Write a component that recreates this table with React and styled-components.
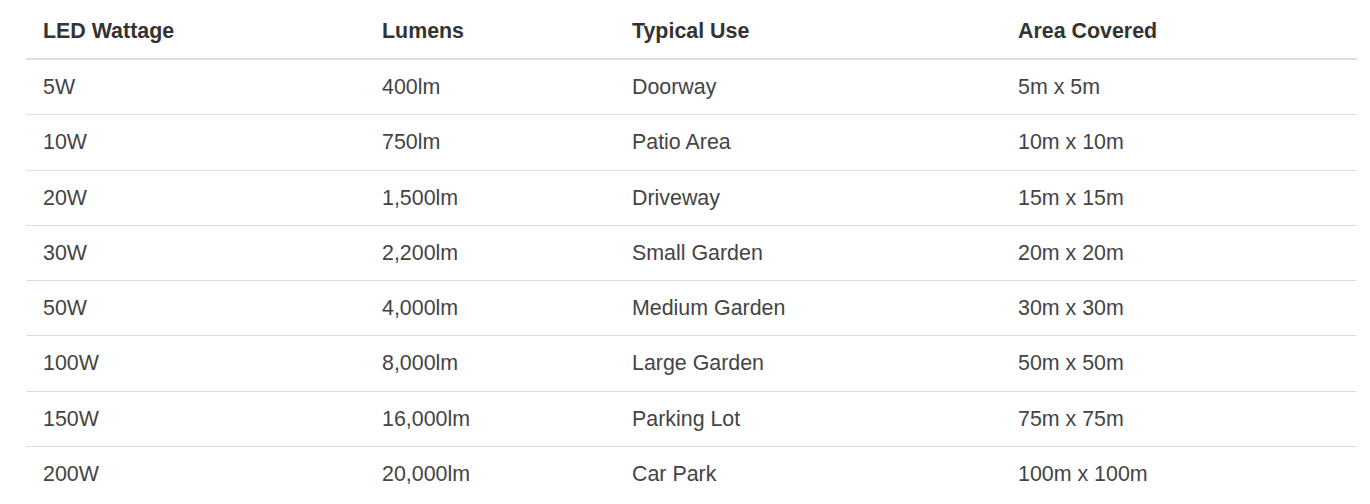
import * as React from 'react';
import styled, { createGlobalStyle } from 'styled-components';


/* data */
const rows = [
    ['5W', '400lm', 'Doorway', '5m x 5m'],
    ['10W', '750lm', 'Patio Area', '10m x 10m'],
    ['20W', '1,500lm', 'Driveway', '15m x 15m'],
    ['30W', '2,200lm', 'Small Garden', '20m x 20m'],
    ['50W', '4,000lm', 'Medium Garden', '30m x 30m'],
    ['100W', '8,000lm', 'Large Garden', '50m x 50m'],
    ['150W', '16,000lm', 'Parking Lot', '75m x 75m'],
    ['200W', '20,000lm', 'Car Park', '100m x 100m'],
];

const headings = ['LED Wattage', 'Lumens', 'Typical Use', 'Area Covered'];
const colWidths = [339, 250, 386, 356];


/* styles */
const GlobalStyle = createGlobalStyle`
  html, body {
    margin: 0;
    padding: 0;
    background: #fff;
  }
`;

const Page = styled('div')`
  padding: 0 13px 0 26px;
  font-family: "Liberation Sans", Arial, sans-serif;
`;

const Table = styled('table')`
  width: 1331px;
  border-collapse: collapse;
  table-layout: fixed;
  font-size: 21.4px;
`;

const HeadCell = styled('th')`
  text-align: left;
  font-weight: bold;
  color: #333;
  line-height: 23px;
  padding: 20px 17px 15px;
  border-bottom: 2px solid #dddddd;
`;

const Row = styled('tr')`
  & + & td {
    border-top: 1px solid #dddddd;
  }
`;

const Cell = styled('td')`
  color: #444;
  line-height: 22.3px;
  padding: 16px 17px 16px;
`;


const App = () => {
    return (
        <Page>
            <GlobalStyle/>
            <Table>
                <colgroup>
                    {colWidths.map((w, i) => <col key={i} style={{ width: w }} />)}
                </colgroup>
                <thead>
                    <tr>
                        {headings.map((h) => <HeadCell key={h}>{h}</HeadCell>)}
                    </tr>
                </thead>
                <tbody>
                    {rows.map((r) => (
                        <Row key={r[0]}>
                            {r.map((c, i) => <Cell key={i}>{c}</Cell>)}
                        </Row>
                    ))}
                </tbody>
            </Table>
        </Page>
    )
};

export default App;
